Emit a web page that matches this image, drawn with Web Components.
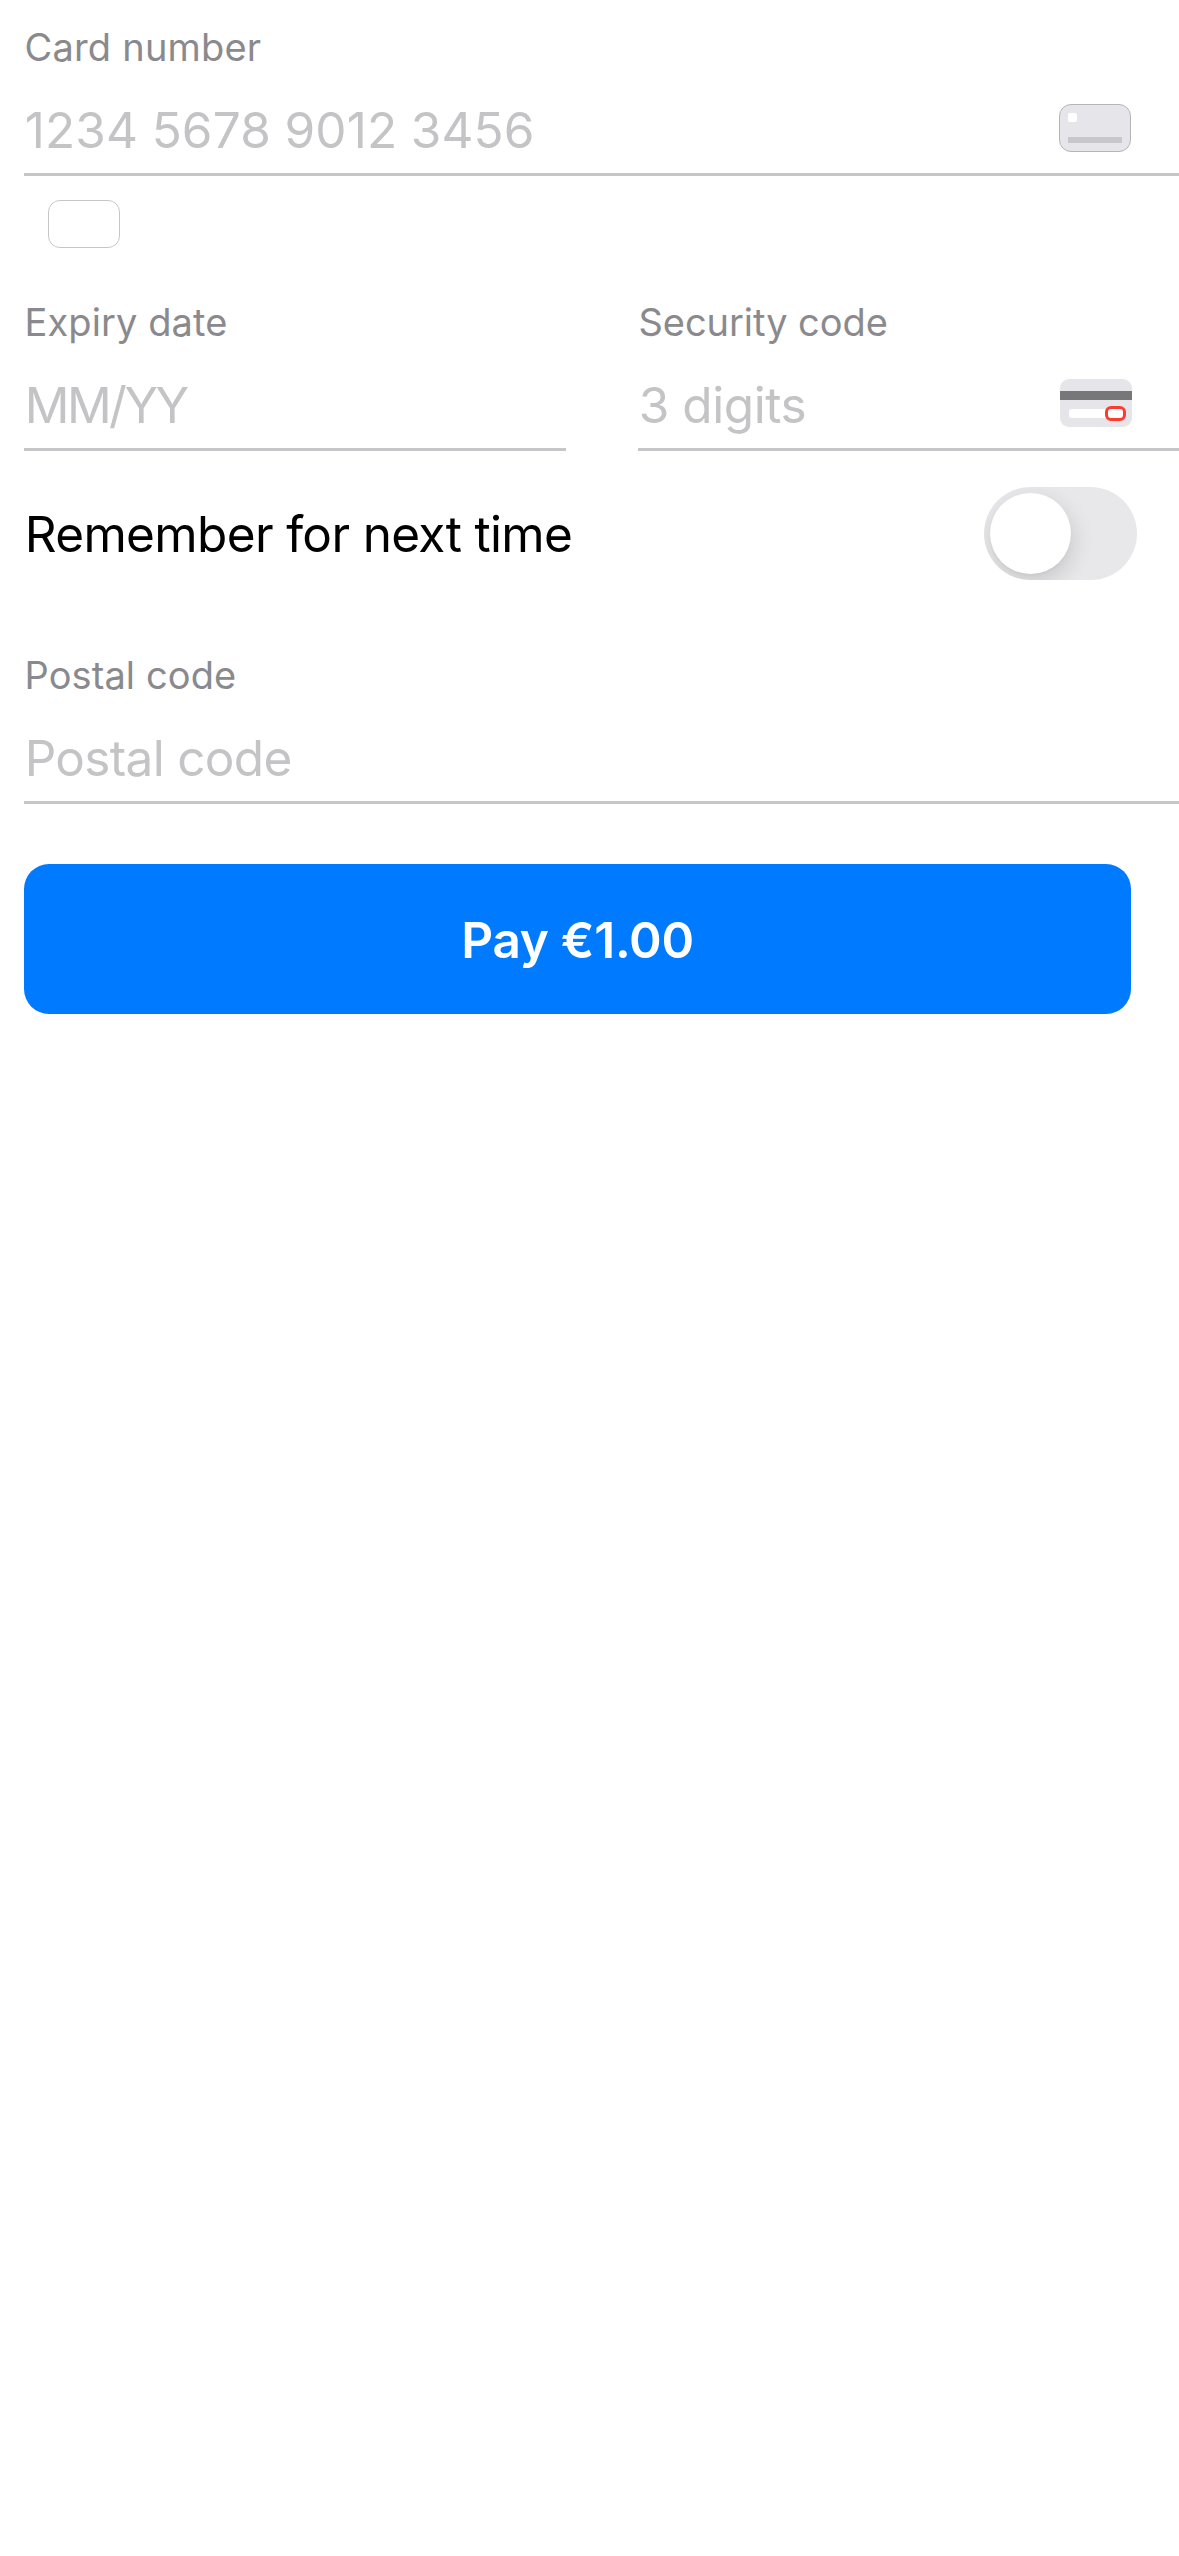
<!DOCTYPE html>
<html lang="en">
<head>
<meta charset="utf-8">
<title>Card payment</title>
<style>
html, body { margin: 0; background: #fff; }
body { min-height: 2556px; font-family: Inter, "Liberation Sans", sans-serif; overflow: hidden; }
</style>
</head>
<body>
<payment-form></payment-form>
<script>
const define = (name, html, setup) => {
  const template = document.createElement('template');
  template.innerHTML = html;
  customElements.define(name, class extends HTMLElement {
    connectedCallback() {
      if (this.shadowRoot) return;
      this.attachShadow({ mode: 'open' }).append(template.content.cloneNode(true));
      if (setup) setup(this, this.shadowRoot);
    }
  });
};

define('card-front-icon', `
<style>:host { display: block; width: 72px; height: 48px; } svg { display: block; }</style>
<svg width="72" height="48" viewBox="0 0 72 48">
  <rect x=".5" y=".5" width="71" height="47" rx="11.5" fill="#e5e5ea" stroke="#b4b4b9"/>
  <rect x="9" y="9" width="9" height="9" rx="2" fill="#fff"/>
  <rect x="9" y="33" width="54" height="6" fill="#c7c7cc"/>
</svg>`);

define('card-back-icon', `
<style>:host { display: block; width: 72px; height: 48px; } svg { display: block; }</style>
<svg width="72" height="48" viewBox="0 0 72 48">
  <rect width="72" height="48" rx="9" fill="#e5e5ea"/>
  <rect y="12" width="72" height="9" fill="#777779"/>
  <rect x="9" y="30" width="50" height="9" rx="2.5" fill="#fff"/>
  <rect x="46.5" y="28.5" width="18" height="12" rx="4.5" fill="#fff" stroke="#ff3b30" stroke-width="3"/>
</svg>`);

define('brand-logo', `
<style>:host { display: block; box-sizing: border-box; width: 72px; height: 48px; border: 1px solid #c6c6c8; border-radius: 12px; }</style>`);

define('form-field', `
<style>
:host { display: block; border-bottom: 3px solid #c6c6c8; }
.label { height: 46px; padding-left: .5px; line-height: 46px; font-size: 38px; letter-spacing: var(--label-tracking, .1px); color: #8a8a8e; white-space: nowrap; }
.row { display: flex; align-items: center; justify-content: space-between; height: 60px; padding: 30px 48px 13px .7px; }
.value { line-height: 60px; font-size: 49.5px; letter-spacing: var(--tracking, 0px); word-spacing: var(--gap, 0px); color: #c4c4c6; white-space: nowrap; }
slot { display: block; }
.icon { margin-top: -4px; }
</style>
<div class="label"></div>
<div class="row"><div class="value"></div><div class="icon"><slot></slot></div></div>`,
(host, root) => {
  root.querySelector('.label').textContent = host.getAttribute('label');
  root.querySelector('.value').textContent = host.getAttribute('placeholder');
});

define('toggle-switch', `
<style>
:host { display: block; box-sizing: border-box; width: 153px; height: 93px; padding: 6px; border-radius: 46.5px; background: #e8e8ea; overflow: hidden; }
div { width: 81px; height: 81px; border-radius: 50%; background: #fff; box-shadow: 2px 8px 22px rgba(0,0,0,.14), 0 2px 3px rgba(0,0,0,.03); }
</style><div></div>`);

define('toggle-row', `
<style>
:host { display: flex; align-items: center; justify-content: space-between; height: 93px; padding: 0 42px 0 .7px; }
.text { font-size: 49.5px; line-height: 60px; letter-spacing: -.65px; color: #000; white-space: nowrap; }
</style><span class="text"><slot></slot></span><toggle-switch></toggle-switch>`);

define('pay-button', `
<style>
:host { display: flex; align-items: center; justify-content: center; box-sizing: border-box; height: 150px; padding-top: 2px; border-radius: 25px; background: #007aff; color: #fff; font-size: 49.5px; line-height: 60px; font-weight: 600; letter-spacing: -.247px; }
</style><slot></slot>`);

define('payment-form', `
<style>
:host { display: flex; flex-direction: column; padding: 24px 0 0 24px; }
brand-logo { margin: 24px 0 51px 24px; }
.pair { display: grid; grid-template-columns: 542px 1fr; column-gap: 72px; margin-bottom: 36px; }
toggle-row { margin-bottom: 72px; }
pay-button { margin: 60px 48px 0 0; }
</style>
<form-field label="Card number" placeholder="1234 5678 9012 3456" style="--tracking:.15px;--gap:-.6px;--label-tracking:.2px"><card-front-icon></card-front-icon></form-field>
<brand-logo></brand-logo>
<div class="pair">
  <form-field label="Expiry date" placeholder="MM/YY" style="--tracking:-2.5px"></form-field>
  <form-field label="Security code" placeholder="3 digits" style="--tracking:-.436px;--label-tracking:-.05px"><card-back-icon style="margin-right:-1px"></card-back-icon></form-field>
</div>
<toggle-row>Remember for next time</toggle-row>
<form-field label="Postal code" placeholder="Postal code" style="--tracking:-.68px"></form-field>
<pay-button>Pay €1.00</pay-button>`);
</script>
</body>
</html>
